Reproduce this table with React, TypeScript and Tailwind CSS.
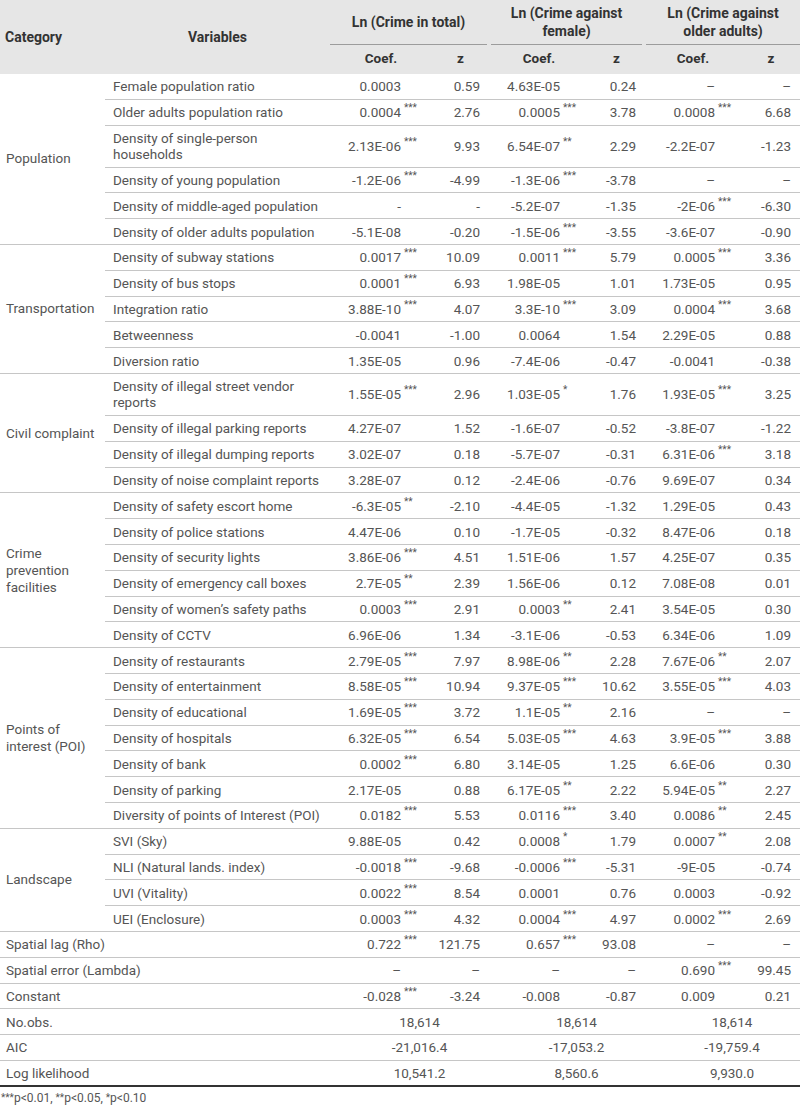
type Cell = [string, string];
type Row = { label: string[]; v: [Cell, string, Cell, string, Cell, string] | null; tall?: boolean };

const c = (n: string, s = ""): Cell => [n, s];

const groups: { name: string[]; rows: Row[] }[] = [
  {
    name: ["Population"],
    rows: [
      { label: ["Female population ratio"], v: [c("0.0003"), "0.59", c("4.63E-05"), "0.24", c("–"), "–"] },
      { label: ["Older adults population ratio"], v: [c("0.0004", "***"), "2.76", c("0.0005", "***"), "3.78", c("0.0008", "***"), "6.68"] },
      { label: ["Density of single-person", "households"], tall: true, v: [c("2.13E-06", "***"), "9.93", c("6.54E-07", "**"), "2.29", c("-2.2E-07"), "-1.23"] },
      { label: ["Density of young population"], v: [c("-1.2E-06", "***"), "-4.99", c("-1.3E-06", "***"), "-3.78", c("–"), "–"] },
      { label: ["Density of middle-aged population"], v: [c("-"), "-", c("-5.2E-07"), "-1.35", c("-2E-06", "***"), "-6.30"] },
      { label: ["Density of older adults population"], v: [c("-5.1E-08"), "-0.20", c("-1.5E-06", "***"), "-3.55", c("-3.6E-07"), "-0.90"] },
    ],
  },
  {
    name: ["Transportation"],
    rows: [
      { label: ["Density of subway stations"], v: [c("0.0017", "***"), "10.09", c("0.0011", "***"), "5.79", c("0.0005", "***"), "3.36"] },
      { label: ["Density of bus stops"], v: [c("0.0001", "***"), "6.93", c("1.98E-05"), "1.01", c("1.73E-05"), "0.95"] },
      { label: ["Integration ratio"], v: [c("3.88E-10", "***"), "4.07", c("3.3E-10", "***"), "3.09", c("0.0004", "***"), "3.68"] },
      { label: ["Betweenness"], v: [c("-0.0041"), "-1.00", c("0.0064"), "1.54", c("2.29E-05"), "0.88"] },
      { label: ["Diversion ratio"], v: [c("1.35E-05"), "0.96", c("-7.4E-06"), "-0.47", c("-0.0041"), "-0.38"] },
    ],
  },
  {
    name: ["Civil complaint"],
    rows: [
      { label: ["Density of illegal street vendor", "reports"], tall: true, v: [c("1.55E-05", "***"), "2.96", c("1.03E-05", "*"), "1.76", c("1.93E-05", "***"), "3.25"] },
      { label: ["Density of illegal parking reports"], v: [c("4.27E-07"), "1.52", c("-1.6E-07"), "-0.52", c("-3.8E-07"), "-1.22"] },
      { label: ["Density of illegal dumping reports"], v: [c("3.02E-07"), "0.18", c("-5.7E-07"), "-0.31", c("6.31E-06", "***"), "3.18"] },
      { label: ["Density of noise complaint reports"], v: [c("3.28E-07"), "0.12", c("-2.4E-06"), "-0.76", c("9.69E-07"), "0.34"] },
    ],
  },
  {
    name: ["Crime", "prevention", "facilities"],
    rows: [
      { label: ["Density of safety escort home"], v: [c("-6.3E-05", "**"), "-2.10", c("-4.4E-05"), "-1.32", c("1.29E-05"), "0.43"] },
      { label: ["Density of police stations"], v: [c("4.47E-06"), "0.10", c("-1.7E-05"), "-0.32", c("8.47E-06"), "0.18"] },
      { label: ["Density of security lights"], v: [c("3.86E-06", "***"), "4.51", c("1.51E-06"), "1.57", c("4.25E-07"), "0.35"] },
      { label: ["Density of emergency call boxes"], v: [c("2.7E-05", "**"), "2.39", c("1.56E-06"), "0.12", c("7.08E-08"), "0.01"] },
      { label: ["Density of women’s safety paths"], v: [c("0.0003", "***"), "2.91", c("0.0003", "**"), "2.41", c("3.54E-05"), "0.30"] },
      { label: ["Density of CCTV"], v: [c("6.96E-06"), "1.34", c("-3.1E-06"), "-0.53", c("6.34E-06"), "1.09"] },
    ],
  },
  {
    name: ["Points of", "interest (POI)"],
    rows: [
      { label: ["Density of restaurants"], v: [c("2.79E-05", "***"), "7.97", c("8.98E-06", "**"), "2.28", c("7.67E-06", "**"), "2.07"] },
      { label: ["Density of entertainment"], v: [c("8.58E-05", "***"), "10.94", c("9.37E-05", "***"), "10.62", c("3.55E-05", "***"), "4.03"] },
      { label: ["Density of educational"], v: [c("1.69E-05", "***"), "3.72", c("1.1E-05", "**"), "2.16", c("–"), "–"] },
      { label: ["Density of hospitals"], v: [c("6.32E-05", "***"), "6.54", c("5.03E-05", "***"), "4.63", c("3.9E-05", "***"), "3.88"] },
      { label: ["Density of bank"], v: [c("0.0002", "***"), "6.80", c("3.14E-05"), "1.25", c("6.6E-06"), "0.30"] },
      { label: ["Density of parking"], v: [c("2.17E-05"), "0.88", c("6.17E-05", "**"), "2.22", c("5.94E-05", "**"), "2.27"] },
      { label: ["Diversity of points of Interest (POI)"], v: [c("0.0182", "***"), "5.53", c("0.0116", "***"), "3.40", c("0.0086", "**"), "2.45"] },
    ],
  },
  {
    name: ["Landscape"],
    rows: [
      { label: ["SVI (Sky)"], v: [c("9.88E-05"), "0.42", c("0.0008", "*"), "1.79", c("0.0007", "**"), "2.08"] },
      { label: ["NLI (Natural lands. index)"], v: [c("-0.0018", "***"), "-9.68", c("-0.0006", "***"), "-5.31", c("-9E-05"), "-0.74"] },
      { label: ["UVI (Vitality)"], v: [c("0.0022", "***"), "8.54", c("0.0001"), "0.76", c("0.0003"), "-0.92"] },
      { label: ["UEI (Enclosure)"], v: [c("0.0003", "***"), "4.32", c("0.0004", "***"), "4.97", c("0.0002", "***"), "2.69"] },
    ],
  },
];

const extra: Row[] = [
  { label: ["Spatial lag (Rho)"], v: [c("0.722", "***"), "121.75", c("0.657", "***"), "93.08", c("–"), "–"] },
  { label: ["Spatial error (Lambda)"], v: [c("–"), "–", c("–"), "–", c("0.690", "***"), "99.45"] },
  { label: ["Constant"], v: [c("-0.028", "***"), "-3.24", c("-0.008"), "-0.87", c("0.009"), "0.21"] },
];

const totals: [string, string, string, string][] = [
  ["No.obs.", "18,614", "18,614", "18,614"],
  ["AIC", "-21,016.4", "-17,053.2", "-19,759.4"],
  ["Log likelihood", "10,541.2", "8,560.6", "9,930.0"],
];

const line = "border-b border-[#c6c6c6]";
const coefPad = ["pr-[9px]", "pr-[7px]", "pr-[5px]"];
const zPad = ["pr-[9px]", "pr-[8px]", "pr-[9px]"];

function Coef({ cell, i }: { cell: Cell; i: number }) {
  return (
    <td className={`${line} p-0 ${coefPad[i]}`}>
      <div className="flex justify-end">
        <span>{cell[0]}</span>
        <span className="relative -top-[1px] w-[22px] pl-[3px] text-left text-[10px] leading-[10px]">{cell[1]}</span>
      </div>
    </td>
  );
}

function Values({ v }: { v: NonNullable<Row["v"]> }) {
  return (
    <>
      {[0, 1, 2].map((i) => [
        <Coef key={`c${i}`} cell={v[i * 2] as Cell} i={i} />,
        <td key={`z${i}`} className={`${line} p-0 text-right ${zPad[i]}`}>
          {v[i * 2 + 1] as string}
        </td>,
      ])}
    </>
  );
}

function GroupHead({ lines, cls }: { lines: string[]; cls: string }) {
  return (
    <th colSpan={2} className="p-0 align-bottom">
      <div className={`flex h-[45px] flex-col items-center justify-center border-b border-[#9c9c9c] text-[14px] leading-[18px] ${cls}`}>
        {lines.map((l) => (
          <span key={l}>{l}</span>
        ))}
      </div>
    </th>
  );
}

export default function App() {
  return (
    <div className="w-[800px] bg-white text-[13.5px] text-[#555] font-['Roboto','Liberation_Sans',sans-serif]">
      <table className="w-[800px] table-fixed border-separate border-spacing-0">
        <colgroup>
          <col className="w-[105px]" />
          <col className="w-[225px]" />
          <col className="w-[102px]" />
          <col className="w-[57px]" />
          <col className="w-[100px]" />
          <col className="w-[55px]" />
          <col className="w-[98px]" />
          <col className="w-[58px]" />
        </colgroup>
        <thead className="bg-[#e6e6e6] font-bold text-[#333]">
          <tr>
            <th rowSpan={2} className="p-0 pl-[5px] text-left align-middle text-[14px]">Category</th>
            <th rowSpan={2} className="p-0 pt-[1px] text-center align-middle text-[14px]">Variables</th>
            <GroupHead lines={["Ln (Crime in total)"]} cls="mr-[2px]" />
            <GroupHead lines={["Ln (Crime against", "female)"]} cls="mx-[2px]" />
            <GroupHead lines={["Ln (Crime against", "older adults)"]} cls="ml-[2px]" />
          </tr>
          <tr className="h-[29px]">
            <th className="p-0 pb-[2px] text-center">Coef.</th>
            <th className="p-0 pb-[2px] text-center">z</th>
            <th className="p-0 pb-[2px] text-center">Coef.</th>
            <th className="p-0 pb-[2px] text-center">z</th>
            <th className="p-0 pb-[2px] text-center">Coef.</th>
            <th className="p-0 pb-[2px] text-center">z</th>
          </tr>
        </thead>
        <tbody className="leading-[16px]">
          {groups.map((g) =>
            g.rows.map((r, ri) => (
              <tr key={r.label.join(" ")} className={r.tall ? "h-[42px]" : "h-[25.8px]"}>
                {ri === 0 && (
                  <td rowSpan={g.rows.length} className={`${line} p-0 pl-[6px] align-middle leading-[17px]`}>
                    {g.name.map((n) => (
                      <div key={n}>{n}</div>
                    ))}
                  </td>
                )}
                <td className={`${line} whitespace-nowrap p-0 pl-[8px]`}>
                  {r.label.map((l) => (
                    <div key={l}>{l}</div>
                  ))}
                </td>
                <Values v={r.v!} />
              </tr>
            ))
          )}
          {extra.map((r) => (
            <tr key={r.label[0]} className="h-[25.8px]">
              <td colSpan={2} className={`${line} p-0 pl-[6px]`}>
                {r.label[0]}
              </td>
              <Values v={r.v!} />
            </tr>
          ))}
          {totals.map((t, ti) => (
            <tr key={t[0]} className="h-[25.8px]">
              <td colSpan={2} className={`p-0 pl-[6px] ${ti === totals.length - 1 ? "border-b-2 border-[#333]" : line}`}>
                {t[0]}
              </td>
              {[1, 2, 3].map((k) => (
                <td
                  key={k}
                  colSpan={2}
                  className={`p-0 pl-[20px] text-center ${ti === totals.length - 1 ? "border-b-2 border-[#333]" : line}`}
                >
                  {t[k]}
                </td>
              ))}
            </tr>
          ))}
        </tbody>
      </table>
      <p className="pl-[1px] pt-[4px] text-[12px] leading-[14px] text-[#555]">
        <span className="relative -top-[1px] text-[10px]">***</span>p&lt;0.01,{" "}
        <span className="relative -top-[1px] text-[10px]">**</span>p&lt;0.05,{" "}
        <span className="relative -top-[1px] text-[10px]">*</span>p&lt;0.10
      </p>
    </div>
  );
}
